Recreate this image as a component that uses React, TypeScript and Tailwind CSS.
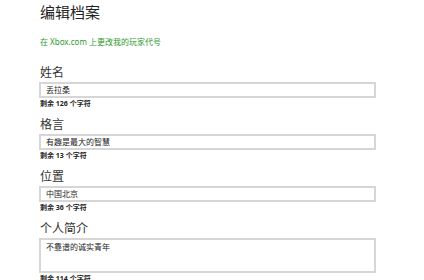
import React from 'react'

type Field = {
    label: string;
    value: string;
    left: number;
    multiline?: boolean;
};

const fields: Field[] = [
    { label: "姓名", value: "丢拉桑", left: 126 },
    { label: "格言", value: "有趣是最大的智慧", left: 13 },
    { label: "位置", value: "中国北京", left: 36 },
    { label: "个人简介", value: "不靠谱的诚实青年", left: 114, multiline: true },
];

export default function App() {
    return (
        <div
            className="w-[424px] h-[280px] overflow-hidden bg-white pl-[39px] pt-[2px] text-[#1a1a1a]"
            style={{ fontFamily: '"Noto Sans", "Noto Sans CJK SC", sans-serif' }}
        >
            {/* Header */}
            <h1 className="ml-px text-[15px] leading-[20px] text-[#222]">编辑档案</h1>
            <a className="mt-[14px] ml-px block text-[8px] leading-[12px] text-[#2e9a2e]">
                在 Xbox.com 上更改我的玩家代号
            </a>

            {/* Form */}
            <div className="mt-[17px] flex flex-col gap-[8px]">
                {fields.map((f) => (
                    <div key={f.label} className="flex flex-col">
                        <label className="ml-px text-[12px] leading-[16px] text-[#333]">{f.label}</label>
                        <div
                            className={
                                f.multiline
                                    ? "mt-[1px] w-[337px] h-[35px] border-2 border-[#d6d6d6] px-[5px] pt-[1px] text-[8px] leading-[12px] text-[#222]"
                                    : "mt-[1px] w-[337px] h-[16px] border-2 border-[#d6d6d6] px-[5px] flex items-center text-[8px] leading-[12px] text-[#222]"
                            }
                        >
                            {f.value}
                        </div>
                        <p className="mt-[1px] ml-px text-[7px] leading-[10px] font-bold text-[#222]">
                            剩余 {f.left} 个字符
                        </p>
                    </div>
                ))}
            </div>
        </div>
    );
}
